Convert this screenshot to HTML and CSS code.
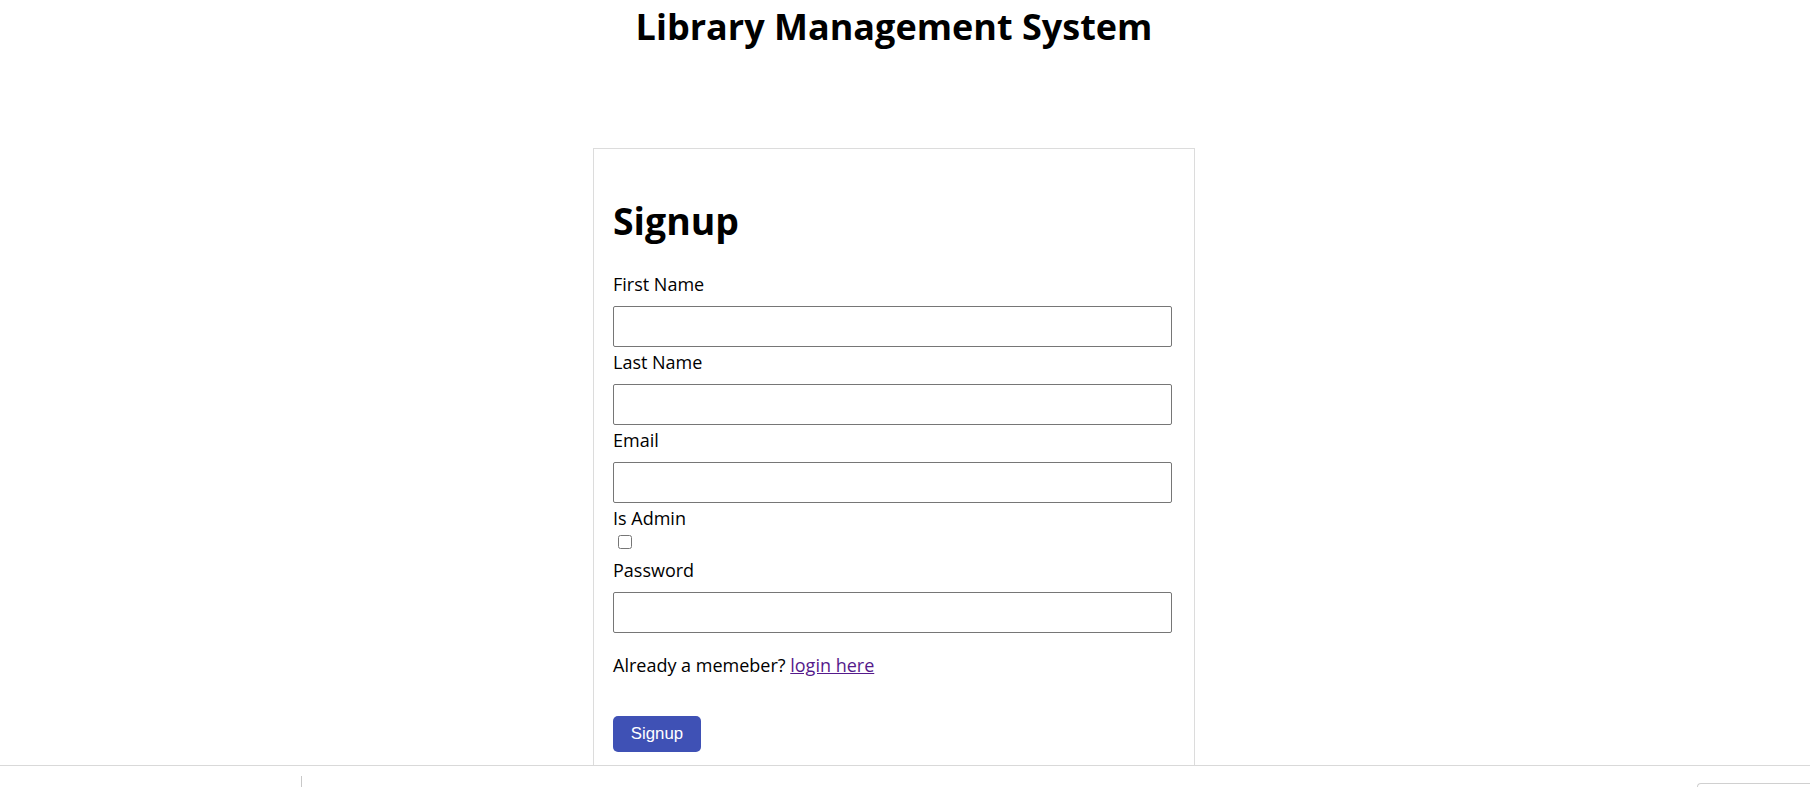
FILE: index.html
```html
<!DOCTYPE html>
<html lang="en">
<head>
<meta charset="utf-8">
<title>Library Management System</title>
<link rel="stylesheet" href="styles.css">
</head>
<body>
<div class="page">
  <h1 class="title">Library Management System</h1>
  <div class="card">
    <h1 class="card-title">Signup</h1>
    <form class="form">
      <label class="label" for="firstName">First Name</label>
      <input class="field" id="firstName" type="text">
      <label class="label" for="lastName">Last Name</label>
      <input class="field" id="lastName" type="text">
      <label class="label" for="email">Email</label>
      <input class="field" id="email" type="email">
      <label class="label" for="isAdmin">Is Admin</label>
      <input class="check" id="isAdmin" type="checkbox">
      <label class="label" for="password">Password</label>
      <input class="field" id="password" type="password">
      <p class="hint">Already a memeber? <a class="link" href="#">login here</a></p>
      <button class="btn" type="button">Signup</button>
    </form>
  </div>
</div>
<div class="statusbar">
  <span class="sb-tick"></span>
  <span class="sb-box"></span>
</div>
</body>
</html>
```
FILE: styles.css
```css
html, body {
  margin: 0;
  padding: 0;
  background: #fff;
  overflow: hidden;
}

body {
  font-family: "Open Sans", "Noto Sans", sans-serif;
  color: #000;
}

.page {
  padding-right: 22px;
}

.title {
  margin: 0;
  padding-top: 2px;
  font-size: 36px;
  line-height: 50px;
  font-weight: 700;
  text-align: center;
}

.card {
  box-sizing: border-box;
  width: 602px;
  margin: 96px auto 0;
  padding: 46px 22px 20px 19px;
  border: 1px solid #dcdcdc;
}

.card-title {
  margin: 0 0 25px;
  font-size: 37.4px;
  line-height: 51px;
  font-weight: 700;
}

.form {
  margin: 0;
}

.label {
  display: block;
  font-size: 18px;
  line-height: 26px;
}

.field {
  display: block;
  box-sizing: border-box;
  width: 559px;
  height: 41px;
  margin: 9px 0 2px;
  padding: 1px 2px;
  border: 1px solid #767676;
  border-radius: 2px;
  background: #fff;
  font: 16px "Open Sans", sans-serif;
}

.check {
  display: block;
  width: 14px;
  height: 14px;
  margin: 4px 0 8px 5px;
}

.hint {
  margin: 19px 0 0;
  font-size: 18px;
  line-height: 26px;
}

.link {
  color: #551a8b;
  text-decoration: underline;
}

.btn {
  display: block;
  width: 88px;
  height: 36px;
  margin-top: 38px;
  padding: 0;
  border: none;
  border-radius: 5px;
  background: #3f51b5;
  color: #fff;
  font: 16.8px "Liberation Sans", Arial, sans-serif;
}

.statusbar {
  position: fixed;
  left: 0;
  right: 0;
  bottom: 0;
  height: 21px;
  display: flex;
  align-items: flex-end;
  padding-left: 301px;
  background: #fff;
  border-top: 1px solid #d9d9d9;
}

.sb-tick {
  width: 1px;
  height: 11px;
  background: #c8c8c8;
}

.sb-box {
  width: 112px;
  height: 3px;
  margin-left: auto;
  border-top: 1px solid #d0d0d0;
  border-left: 1px solid #d0d0d0;
  border-top-left-radius: 4px;
}
```
